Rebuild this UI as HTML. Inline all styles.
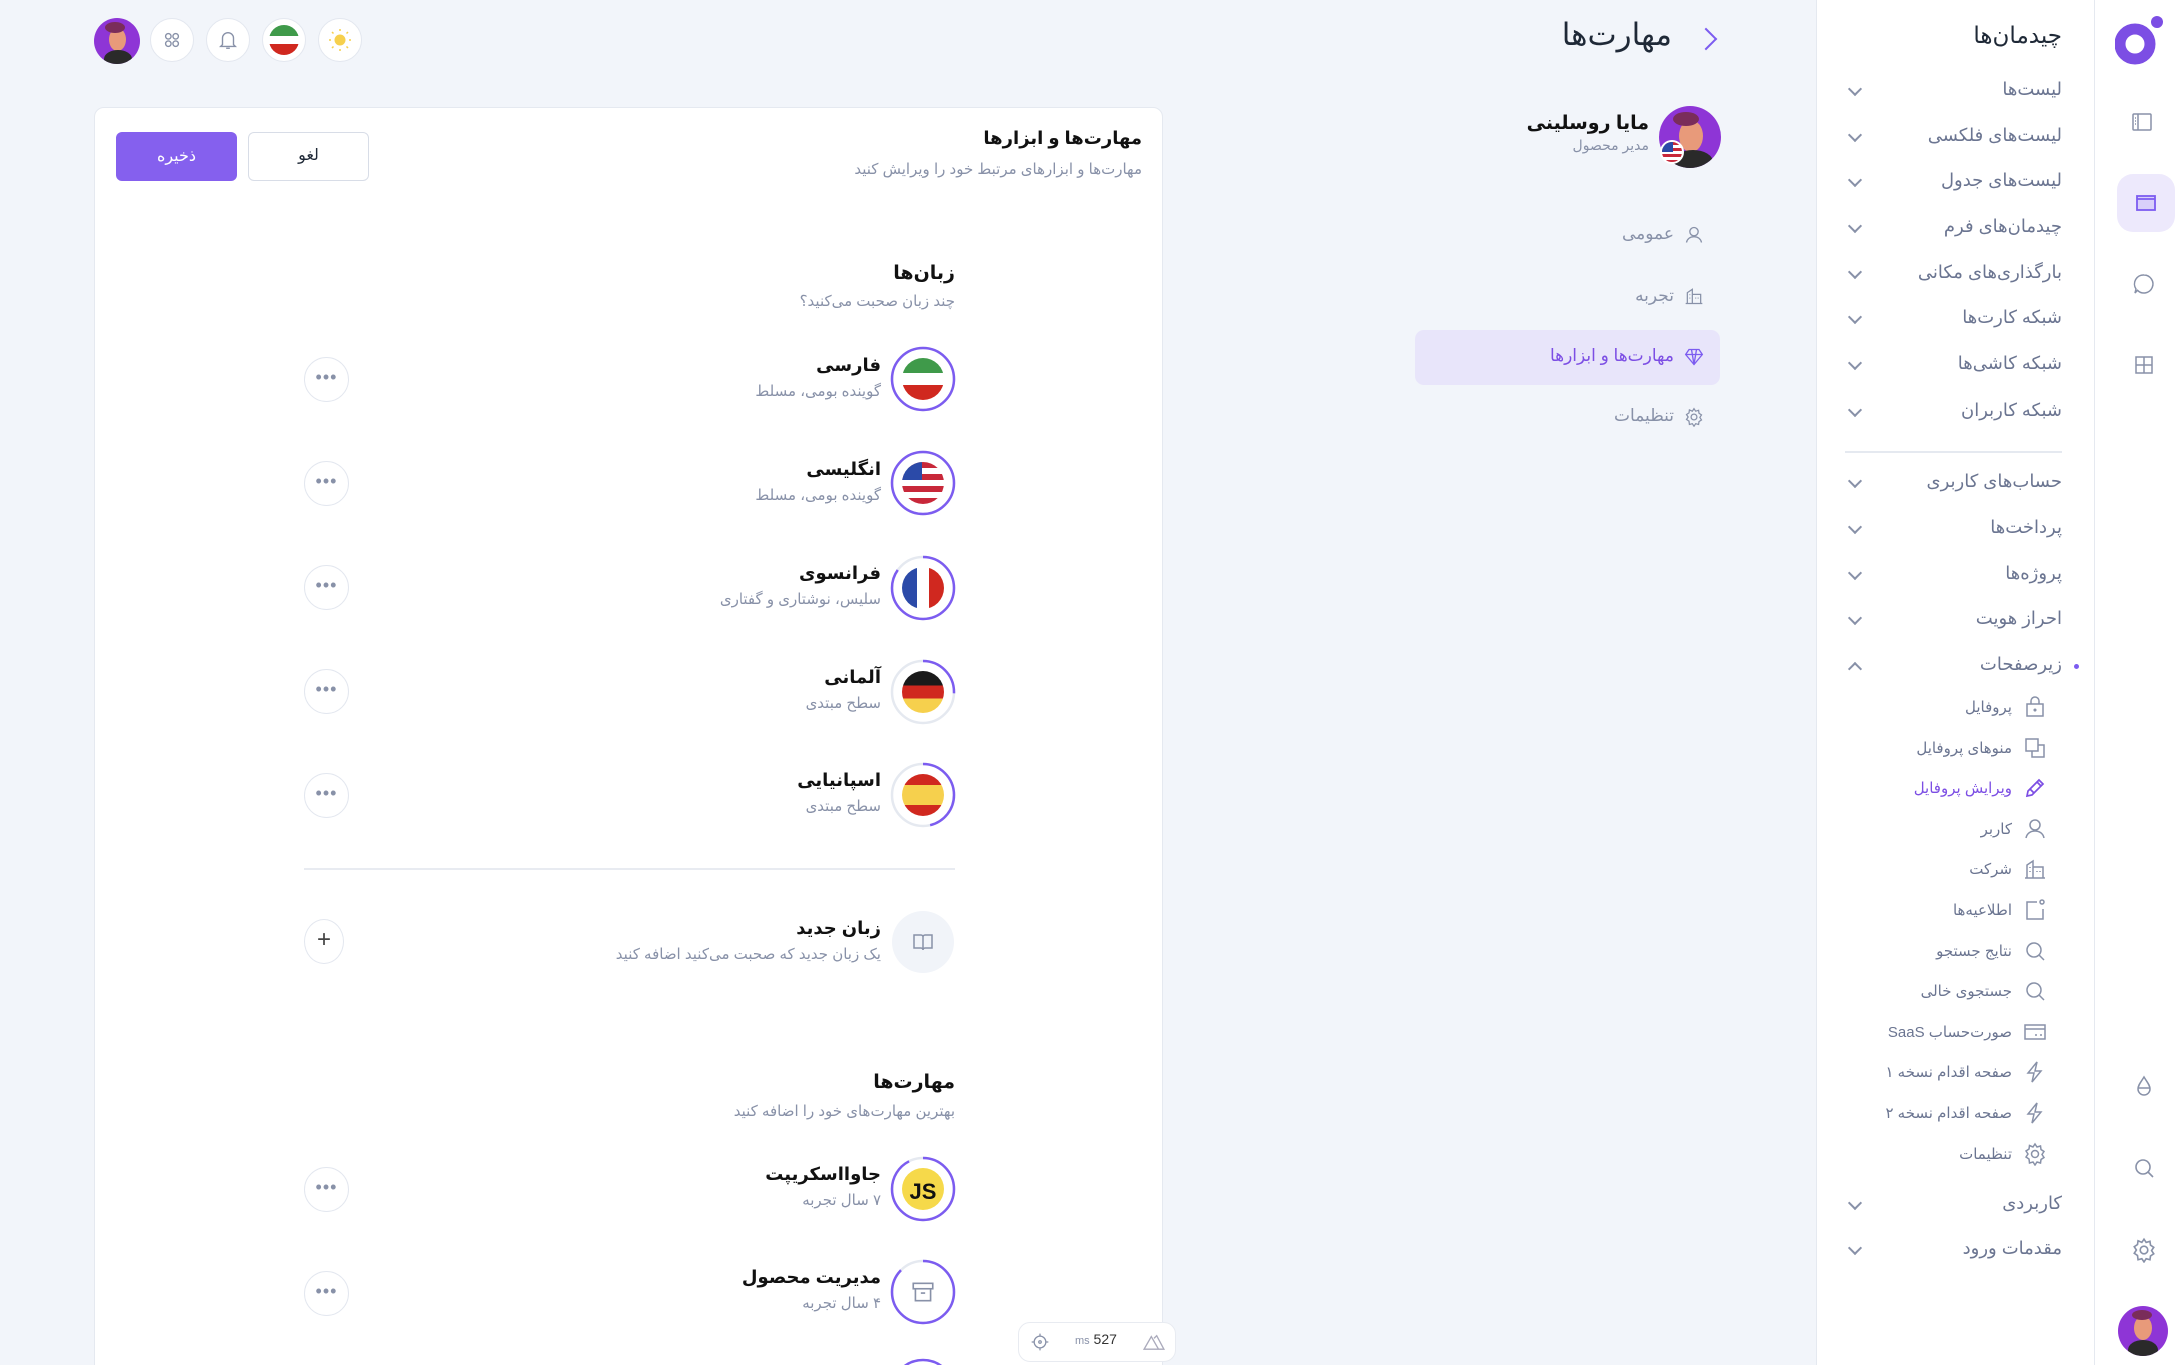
<!DOCTYPE html>
<html><head><meta charset="utf-8">
<style>
*{box-sizing:border-box;margin:0;padding:0}
html,body{width:2184px;height:1365px;overflow:hidden}
body{background:#f2f5fa;font-family:"Liberation Sans","Noto Sans CJK SC","DejaVu Sans",sans-serif;color:#1f2937}
#w{position:relative;width:2184px;height:1365px;overflow:hidden}
.a{position:absolute}
.r{position:absolute;direction:rtl;text-align:right;white-space:nowrap}
.muted{color:#8891a8}
.side{color:#6b7591;font-size:18px}
.sub{color:#6b7591;font-size:15px}
.chev{position:absolute;width:10px;height:10px;border-right:2px solid #8891a8;border-bottom:2px solid #8891a8;transform:rotate(45deg)}
.dots{position:absolute;width:45px;height:45px;border:1.5px solid #e3e7ef;border-radius:50%;background:#fff;text-align:center;line-height:38px;color:#8891a8;font-size:18px;letter-spacing:1px}
.tb{position:absolute;width:44px;height:44px;border:1.5px solid #e3e7ef;border-radius:50%;background:#fff}
</style></head><body><div id="w">

<!-- icon rail -->
<div class="a" style="left:2094px;top:0;width:90px;height:1365px;background:#fff;border-left:1.5px solid #e5e9f0"></div>
<svg class="a" style="left:2115px;top:14px" width="52" height="56" viewBox="0 0 52 56"><circle cx="20" cy="30" r="15" fill="none" stroke="#7c4ee4" stroke-width="11"/><circle cx="42" cy="8" r="6" fill="#7c4ee4"/></svg>
<svg class="a" style="left:2130px;top:110px" width="24" height="24" viewBox="0 0 24 24" fill="none" stroke="#8891a8" stroke-width="1.5"><rect x="3" y="4" width="18" height="16" rx="1"/><path d="M8 4v16M5 8h1M5 11h1M5 14h1"/></svg>
<div class="a" style="left:2117px;top:174px;width:58px;height:58px;border-radius:16px;background:#ede9fc"></div>
<svg class="a" style="left:2134px;top:191px" width="24" height="24" viewBox="0 0 24 24" fill="none" stroke="#7c5cf0" stroke-width="1.8"><rect x="3" y="5" width="18" height="14" fill="#d9d0fa"/><path d="M3 8h18"/></svg>
<svg class="a" style="left:2132px;top:272px" width="24" height="24" viewBox="0 0 24 24" fill="none" stroke="#8891a8" stroke-width="1.5"><path d="M12 3a9 9 0 1 1-6.5 15.3L3 21l1-4A9 9 0 0 1 12 3z"/></svg>
<svg class="a" style="left:2132px;top:353px" width="24" height="24" viewBox="0 0 24 24" fill="none" stroke="#8891a8" stroke-width="1.5"><rect x="4" y="4" width="16" height="16"/><path d="M12 4v16M4 12h16"/></svg>
<svg class="a" style="left:2132px;top:1074px" width="24" height="24" viewBox="0 0 24 24" fill="none" stroke="#8891a8" stroke-width="1.5"><path d="M12 3c-3 5-6 8-6 12a6 6 0 0 0 12 0c0-4-3-7-6-12z"/><path d="M6 14h12"/></svg>
<svg class="a" style="left:2132px;top:1156px" width="24" height="24" viewBox="0 0 24 24" fill="none" stroke="#8891a8" stroke-width="1.6"><circle cx="11" cy="11" r="7"/><path d="M16 16l5 5"/></svg>
<svg class="a" style="left:2131px;top:1237px" width="26" height="26" viewBox="0 0 24 24" fill="none" stroke="#8891a8" stroke-width="1.5"><circle cx="12" cy="12" r="3.5"/><path d="M12 2l2 3 3.5-1 .5 3.5 3 2-2 3 2 3-3 2-.5 3.5-3.5-1-2 3-2-3-3.5 1L6 17l-3-2 2-3-2-3 3-2 .5-3.5L10 5z"/></svg>
<div class="a" style="left:2118px;top:1306px;width:50px;height:50px;border-radius:50%;background:#8e35d6;overflow:hidden"><div class="a" style="left:16px;top:10px;width:18px;height:24px;border-radius:50%;background:#e89a7a"></div><div class="a" style="left:10px;top:34px;width:30px;height:20px;border-radius:50% 50% 0 0;background:#2a2a2a"></div><div class="a" style="left:14px;top:4px;width:20px;height:10px;border-radius:50%;background:#7a2d5a"></div></div>

<!-- sidebar -->
<div class="a" style="left:1816px;top:0;width:278px;height:1365px;background:#fff;border-left:1.5px solid #e5e9f0"></div>
<div class="r" style="right:122px;top:22px;font-size:23px;color:#1f2937">چیدمان‌ها</div>
<div class="r side" style="right:122px;top:79px">لیست‌ها</div><div class="chev" style="left:1850px;top:84px"></div>
<div class="r side" style="right:122px;top:125px">لیست‌های فلکسی</div><div class="chev" style="left:1850px;top:130px"></div>
<div class="r side" style="right:122px;top:170px">لیست‌های جدول</div><div class="chev" style="left:1850px;top:175px"></div>
<div class="r side" style="right:122px;top:216px">چیدمان‌های فرم</div><div class="chev" style="left:1850px;top:221px"></div>
<div class="r side" style="right:122px;top:262px">بارگذاری‌های مکانی</div><div class="chev" style="left:1850px;top:267px"></div>
<div class="r side" style="right:122px;top:307px">شبکه کارت‌ها</div><div class="chev" style="left:1850px;top:312px"></div>
<div class="r side" style="right:122px;top:353px">شبکه کاشی‌ها</div><div class="chev" style="left:1850px;top:358px"></div>
<div class="r side" style="right:122px;top:400px">شبکه کاربران</div><div class="chev" style="left:1850px;top:405px"></div>
<div class="a" style="left:1845px;top:451px;width:217px;height:1.5px;background:#e5e9f0"></div>
<div class="r side" style="right:122px;top:471px">حساب‌های کاربری</div><div class="chev" style="left:1850px;top:476px"></div>
<div class="r side" style="right:122px;top:517px">پرداخت‌ها</div><div class="chev" style="left:1850px;top:522px"></div>
<div class="r side" style="right:122px;top:563px">پروژه‌ها</div><div class="chev" style="left:1850px;top:568px"></div>
<div class="r side" style="right:122px;top:608px">احراز هویت</div><div class="chev" style="left:1850px;top:613px"></div>
<div class="r side" style="right:122px;top:654px">زیرصفحات</div><div class="chev" style="left:1850px;top:664px;transform:rotate(-135deg)"></div>
<div class="a" style="left:2074px;top:664px;width:5px;height:5px;border-radius:50%;background:#7c5cf0"></div>

<div class="r sub" style="right:172px;top:698px">پروفایل</div>
<div class="r sub" style="right:172px;top:739px">منوهای پروفایل</div>
<div class="r sub" style="right:172px;top:779px;color:#7c4ee4">ویرایش پروفایل</div>
<div class="r sub" style="right:172px;top:820px">کاربر</div>
<div class="r sub" style="right:172px;top:860px">شرکت</div>
<div class="r sub" style="right:172px;top:901px">اطلاعیه‌ها</div>
<div class="r sub" style="right:172px;top:942px">نتایج جستجو</div>
<div class="r sub" style="right:172px;top:982px">جستجوی خالی</div>
<div class="r sub" style="right:172px;top:1023px">صورت‌حساب SaaS</div>
<div class="r sub" style="right:172px;top:1063px">صفحه اقدام نسخه ۱</div>
<div class="r sub" style="right:172px;top:1104px">صفحه اقدام نسخه ۲</div>
<div class="r sub" style="right:172px;top:1145px">تنظیمات</div>
<svg class="a" style="left:2023px;top:695px" width="24" height="24" viewBox="0 0 24 24" fill="none" stroke="#8891a8" stroke-width="1.5"><rect x="4" y="9" width="16" height="12"/><path d="M8 9V6a4 4 0 0 1 8 0v3"/><circle cx="12" cy="15" r=".8"/></svg>
<svg class="a" style="left:2023px;top:736px" width="24" height="24" viewBox="0 0 24 24" fill="none" stroke="#8891a8" stroke-width="1.5"><rect x="3" y="3" width="12" height="12"/><path d="M15 9h6v12H9v-6"/></svg>
<svg class="a" style="left:2023px;top:776px" width="24" height="24" viewBox="0 0 24 24" fill="none" stroke="#7c4ee4" stroke-width="1.7"><path d="M4 20l1-5L16 4l4 4L9 19z"/><path d="M14 6l4 4M7 13l4 4"/></svg>
<svg class="a" style="left:2023px;top:817px" width="24" height="24" viewBox="0 0 24 24" fill="none" stroke="#8891a8" stroke-width="1.5"><circle cx="12" cy="8" r="5"/><path d="M3 21c1-5 5-7 9-7s8 2 9 7"/></svg>
<svg class="a" style="left:2023px;top:857px" width="24" height="24" viewBox="0 0 24 24" fill="none" stroke="#8891a8" stroke-width="1.5"><path d="M2 21h20M4 21V8l6-4v17M10 10h10v11M7 10v1M7 14v1M14 14v1M17 14v1"/></svg>
<svg class="a" style="left:2023px;top:898px" width="24" height="24" viewBox="0 0 24 24" fill="none" stroke="#8891a8" stroke-width="1.5"><path d="M14 4H4v17h16V11"/><circle cx="19" cy="4" r="2"/></svg>
<svg class="a" style="left:2023px;top:939px" width="24" height="24" viewBox="0 0 24 24" fill="none" stroke="#8891a8" stroke-width="1.5"><circle cx="11" cy="11" r="7"/><path d="M16 16l5 5"/></svg>
<svg class="a" style="left:2023px;top:979px" width="24" height="24" viewBox="0 0 24 24" fill="none" stroke="#8891a8" stroke-width="1.5"><circle cx="11" cy="11" r="7"/><path d="M16 16l5 5"/></svg>
<svg class="a" style="left:2023px;top:1020px" width="24" height="24" viewBox="0 0 24 24" fill="none" stroke="#8891a8" stroke-width="1.5"><rect x="2" y="5" width="20" height="14"/><path d="M2 9h20M12 15h2M17 15h2"/></svg>
<svg class="a" style="left:2023px;top:1060px" width="24" height="24" viewBox="0 0 24 24" fill="none" stroke="#8891a8" stroke-width="1.5"><path d="M14 2L5 13h6l-2 9 9-11h-6z"/></svg>
<svg class="a" style="left:2023px;top:1101px" width="24" height="24" viewBox="0 0 24 24" fill="none" stroke="#8891a8" stroke-width="1.5"><path d="M14 2L5 13h6l-2 9 9-11h-6z"/></svg>
<svg class="a" style="left:2023px;top:1142px" width="24" height="24" viewBox="0 0 24 24" fill="none" stroke="#8891a8" stroke-width="1.5"><circle cx="12" cy="12" r="3.5"/><path d="M12 2l2 3 3.5-1 .5 3.5 3 2-2 3 2 3-3 2-.5 3.5-3.5-1-2 3-2-3-3.5 1L6 17l-3-2 2-3-2-3 3-2 .5-3.5L10 5z"/></svg>
<div class="r side" style="right:122px;top:1193px">کاربردی</div><div class="chev" style="left:1850px;top:1198px"></div>
<div class="r side" style="right:122px;top:1238px">مقدمات ورود</div><div class="chev" style="left:1850px;top:1243px"></div>

<!-- profile column -->
<div class="r" style="right:512px;top:17px;font-size:31px;color:#1f2937">مهارت‌ها</div>
<div class="a" style="left:1698px;top:31px;width:16px;height:16px;border-right:2px solid #7c5cf0;border-bottom:2px solid #7c5cf0;transform:rotate(-45deg)"></div>
<div class="a" style="left:1659px;top:106px;width:62px;height:62px;border-radius:50%;background:#8e35d6;overflow:hidden"><div class="a" style="left:20px;top:14px;width:24px;height:32px;border-radius:50%;background:#e89a7a"></div><div class="a" style="left:14px;top:44px;width:40px;height:24px;border-radius:50% 50% 0 0;background:#2a2a2a"></div><div class="a" style="left:14px;top:6px;width:26px;height:14px;border-radius:50%;background:#7a2d5a"></div></div>
<div class="a" style="left:1660px;top:140px;width:24px;height:24px;border-radius:50%;border:2px solid #fff;background:repeating-linear-gradient(#c8283a 0 3px,#fff 3px 6px);overflow:hidden"><div style="width:11px;height:10px;background:#2b4aa8"></div></div>
<div class="r" style="right:535px;top:112px;font-size:19px;font-weight:bold;color:#111">مایا روسلینی</div>
<div class="r muted" style="right:535px;top:137px;font-size:14px">مدیر محصول</div>

<div class="r muted" style="right:510px;top:224px;font-size:17px">عمومی</div>
<svg class="a" style="left:1684px;top:225px" width="20" height="20" viewBox="0 0 24 24" fill="none" stroke="#8891a8" stroke-width="1.6"><circle cx="12" cy="8" r="5"/><path d="M3 21c1-5 5-7 9-7s8 2 9 7"/></svg>
<div class="r muted" style="right:510px;top:286px;font-size:17px">تجربه</div>
<svg class="a" style="left:1684px;top:286px" width="20" height="20" viewBox="0 0 24 24" fill="none" stroke="#8891a8" stroke-width="1.5"><path d="M2 21h20M4 21V8l6-4v17M10 10h10v11M7 10v1M7 14v1M14 14v1M17 14v1"/></svg>
<div class="a" style="left:1415px;top:330px;width:305px;height:55px;border-radius:9px;background:#e8e5fa"></div>
<div class="r" style="right:510px;top:346px;font-size:17px;color:#7c4ee4">مهارت‌ها و ابزارها</div>
<svg class="a" style="left:1684px;top:347px" width="20" height="20" viewBox="0 0 24 24" fill="none" stroke="#7c5cf0" stroke-width="1.6"><path d="M6 3h12l4 6-10 12L2 9z"/><path d="M2 9h20M9 3l3 18 3-18"/></svg>
<div class="r muted" style="right:510px;top:406px;font-size:17px">تنظیمات</div>
<svg class="a" style="left:1684px;top:407px" width="20" height="20" viewBox="0 0 24 24" fill="none" stroke="#8891a8" stroke-width="1.5"><circle cx="12" cy="12" r="3.5"/><path d="M12 2l2 3 3.5-1 .5 3.5 3 2-2 3 2 3-3 2-.5 3.5-3.5-1-2 3-2-3-3.5 1L6 17l-3-2 2-3-2-3 3-2 .5-3.5L10 5z"/></svg>

<!-- top toolbar -->
<div class="a" style="left:94px;top:18px;width:46px;height:46px;border-radius:50%;background:#8e35d6;overflow:hidden"><div class="a" style="left:15px;top:10px;width:17px;height:23px;border-radius:50%;background:#e89a7a"></div><div class="a" style="left:10px;top:32px;width:28px;height:18px;border-radius:50% 50% 0 0;background:#2a2a2a"></div><div class="a" style="left:11px;top:4px;width:20px;height:11px;border-radius:50%;background:#7a2d5a"></div></div>
<div class="tb" style="left:150px;top:18px"><svg class="a" style="left:10px;top:10px" width="22" height="22" viewBox="0 0 24 24" fill="none" stroke="#8891a8" stroke-width="1.5"><circle cx="8" cy="8" r="3"/><circle cx="16" cy="8" r="3"/><circle cx="8" cy="16" r="3"/><circle cx="16" cy="16" r="3"/></svg></div>
<div class="tb" style="left:206px;top:18px"><svg class="a" style="left:10px;top:10px" width="22" height="22" viewBox="0 0 24 24" fill="none" stroke="#8891a8" stroke-width="1.5"><path d="M6 17V10a6 6 0 0 1 12 0v7l2 2H4z"/><path d="M10 21h4"/></svg></div>
<div class="tb" style="left:262px;top:18px"><div class="a" style="left:6px;top:6px;width:30px;height:30px;border-radius:50%;background:linear-gradient(#3f9a4a 0 36%,#fff 36% 64%,#d0281f 64%)"></div></div>
<div class="tb" style="left:318px;top:18px"><svg class="a" style="left:9px;top:9px" width="24" height="24" viewBox="0 0 24 24"><circle cx="12" cy="12" r="5.5" fill="#f6d04d"/><g stroke="#f6d04d" stroke-width="1.5"><path d="M12 1v2M12 21v2M1 12h2M21 12h2M4 4l1.5 1.5M18.5 18.5L20 20M4 20l1.5-1.5M18.5 5.5L20 4"/></g></svg></div>

<!-- card -->
<div class="a" style="left:94px;top:107px;width:1069px;height:1300px;background:#fff;border:1.5px solid #e5e9f0;border-radius:10px"></div>
<div class="r" style="right:1042px;top:128px;font-size:18px;font-weight:bold;color:#111">مهارت‌ها و ابزارها</div>
<div class="r muted" style="right:1042px;top:160px;font-size:15px">مهارت‌ها و ابزارهای مرتبط خود را ویرایش کنید</div>
<div class="a" style="left:116px;top:132px;width:121px;height:49px;border-radius:6px;background:#8560ee;color:#fff;text-align:center;line-height:49px;font-size:16px">ذخیره</div>
<div class="a" style="left:248px;top:132px;width:121px;height:49px;border-radius:6px;border:1.5px solid #d8dde7;background:#fff;color:#1f2937;text-align:center;line-height:46px;font-size:16px">لغو</div>

<div class="r" style="right:1229px;top:262px;font-size:19px;font-weight:bold;color:#111">زبان‌ها</div>
<div class="r muted" style="right:1229px;top:292px;font-size:15px">چند زبان صحبت می‌کنید؟</div>

<svg class="a" style="left:890px;top:346px" width="66" height="66"><circle cx="33" cy="33" r="31" fill="none" stroke="#e5e9f0" stroke-width="2.5"/><circle cx="33" cy="33" r="31" fill="none" stroke="#7c5cf0" stroke-width="2.5"/></svg>
<div class="a" style="left:902px;top:358px;width:42px;height:42px;border-radius:50%;background:linear-gradient(#3f9a4a 0 36%,#fff 36% 64%,#d0281f 64%)"></div>
<div class="r" style="right:1303px;top:355px;font-size:18px;font-weight:bold;color:#111">فارسی</div>
<div class="r muted" style="right:1303px;top:382px;font-size:15px">گوینده بومی، مسلط</div>
<div class="dots" style="left:304px;top:357px">•••</div>

<svg class="a" style="left:890px;top:450px" width="66" height="66"><circle cx="33" cy="33" r="31" fill="none" stroke="#e5e9f0" stroke-width="2.5"/><circle cx="33" cy="33" r="31" fill="none" stroke="#7c5cf0" stroke-width="2.5"/></svg>
<div class="a" style="left:902px;top:462px;width:42px;height:42px;border-radius:50%;background:repeating-linear-gradient(#c8283a 0 6px,#fff 6px 12px);overflow:hidden"><div style="width:20px;height:18px;background:#2b4aa8"></div></div>
<div class="r" style="right:1303px;top:459px;font-size:18px;font-weight:bold;color:#111">انگلیسی</div>
<div class="r muted" style="right:1303px;top:486px;font-size:15px">گوینده بومی، مسلط</div>
<div class="dots" style="left:304px;top:461px">•••</div>

<svg class="a" style="left:890px;top:555px;transform:rotate(-90deg)" width="66" height="66"><circle cx="33" cy="33" r="31" fill="none" stroke="#e5e9f0" stroke-width="2.5"/><circle cx="33" cy="33" r="31" fill="none" stroke="#7c5cf0" stroke-width="2.5" stroke-dasharray="165 200"/></svg>
<div class="a" style="left:902px;top:567px;width:42px;height:42px;border-radius:50%;background:linear-gradient(90deg,#2b4aa8 0 36%,#fff 36% 64%,#d0281f 64%)"></div>
<div class="r" style="right:1303px;top:563px;font-size:18px;font-weight:bold;color:#111">فرانسوی</div>
<div class="r muted" style="right:1303px;top:590px;font-size:15px">سلیس، نوشتاری و گفتاری</div>
<div class="dots" style="left:304px;top:565px">•••</div>

<svg class="a" style="left:890px;top:659px;transform:rotate(-90deg)" width="66" height="66"><circle cx="33" cy="33" r="31" fill="none" stroke="#e5e9f0" stroke-width="2.5"/><circle cx="33" cy="33" r="31" fill="none" stroke="#7c5cf0" stroke-width="2.5" stroke-dasharray="50 200"/></svg>
<div class="a" style="left:902px;top:671px;width:42px;height:42px;border-radius:50%;background:linear-gradient(#1a1a1a 0 34%,#d0281f 34% 66%,#f6d04d 66%)"></div>
<div class="r" style="right:1303px;top:667px;font-size:18px;font-weight:bold;color:#111">آلمانی</div>
<div class="r muted" style="right:1303px;top:694px;font-size:15px">سطح مبتدی</div>
<div class="dots" style="left:304px;top:669px">•••</div>

<svg class="a" style="left:890px;top:762px;transform:rotate(-90deg)" width="66" height="66"><circle cx="33" cy="33" r="31" fill="none" stroke="#e5e9f0" stroke-width="2.5"/><circle cx="33" cy="33" r="31" fill="none" stroke="#7c5cf0" stroke-width="2.5" stroke-dasharray="90 200"/></svg>
<div class="a" style="left:902px;top:774px;width:42px;height:42px;border-radius:50%;background:linear-gradient(#d0281f 0 26%,#f6d04d 26% 74%,#d0281f 74%)"></div>
<div class="r" style="right:1303px;top:770px;font-size:18px;font-weight:bold;color:#111">اسپانیایی</div>
<div class="r muted" style="right:1303px;top:797px;font-size:15px">سطح مبتدی</div>
<div class="dots" style="left:304px;top:773px">•••</div>

<div class="a" style="left:304px;top:868px;width:651px;height:2px;background:#e8ebf1"></div>

<div class="a" style="left:892px;top:911px;width:62px;height:62px;border-radius:50%;background:#f1f4f9"></div>
<svg class="a" style="left:911px;top:930px" width="24" height="24" viewBox="0 0 24 24" fill="none" stroke="#8891a8" stroke-width="1.5"><path d="M3 5h7a2 2 0 0 1 2 2v13a2 2 0 0 0-2-2H3zM21 5h-7a2 2 0 0 0-2 2v13a2 2 0 0 1 2-2h7z"/></svg>
<div class="r" style="right:1303px;top:918px;font-size:18px;font-weight:bold;color:#111">زبان جدید</div>
<div class="r muted" style="right:1303px;top:945px;font-size:15px">یک زبان جدید که صحبت می‌کنید اضافه کنید</div>
<div class="a" style="left:304px;top:919px;width:40px;height:45px;border:1.5px solid #e3e7ef;border-radius:50%;text-align:center;line-height:40px;font-size:24px;color:#444">+</div>

<div class="r" style="right:1229px;top:1071px;font-size:19px;font-weight:bold;color:#111">مهارت‌ها</div>
<div class="r muted" style="right:1229px;top:1102px;font-size:15px">بهترین مهارت‌های خود را اضافه کنید</div>

<svg class="a" style="left:890px;top:1156px;transform:rotate(-90deg)" width="66" height="66"><circle cx="33" cy="33" r="31" fill="none" stroke="#e5e9f0" stroke-width="2.5"/><circle cx="33" cy="33" r="31" fill="none" stroke="#7c5cf0" stroke-width="2.5" stroke-dasharray="180 200"/></svg>
<div class="a" style="left:902px;top:1168px;width:42px;height:42px;border-radius:50%;background:#f6d94a;font-weight:bold;font-size:22px;color:#111;text-align:center;line-height:48px">JS</div>
<div class="r" style="right:1303px;top:1164px;font-size:18px;font-weight:bold;color:#111">جاوااسکریپت</div>
<div class="r muted" style="right:1303px;top:1191px;font-size:15px">۷ سال تجربه</div>
<div class="dots" style="left:304px;top:1167px">•••</div>

<svg class="a" style="left:890px;top:1259px;transform:rotate(-90deg)" width="66" height="66"><circle cx="33" cy="33" r="31" fill="none" stroke="#e5e9f0" stroke-width="2.5"/><circle cx="33" cy="33" r="31" fill="none" stroke="#7c5cf0" stroke-width="2.5" stroke-dasharray="170 200"/></svg>
<svg class="a" style="left:910px;top:1279px" width="26" height="26" viewBox="0 0 24 24" fill="none" stroke="#8891a8" stroke-width="1.5"><rect x="3" y="4" width="18" height="5"/><path d="M5 9v11h14V9M10 13h4"/></svg>
<div class="r" style="right:1303px;top:1267px;font-size:18px;font-weight:bold;color:#111">مدیریت محصول</div>
<div class="r muted" style="right:1303px;top:1294px;font-size:15px">۴ سال تجربه</div>
<div class="dots" style="left:304px;top:1271px">•••</div>

<svg class="a" style="left:890px;top:1358px" width="66" height="66"><circle cx="33" cy="33" r="31" fill="none" stroke="#7c5cf0" stroke-width="2.5"/></svg>

<!-- perf widget -->
<div class="a" style="left:1018px;top:1322px;width:158px;height:40px;border-radius:12px;background:#fff;border:1.5px solid #e8ebf1"></div>
<svg class="a" style="left:1030px;top:1332px" width="20" height="20" viewBox="0 0 24 24" fill="none" stroke="#8891a8" stroke-width="1.5"><circle cx="12" cy="12" r="7"/><circle cx="12" cy="12" r="1.5"/><path d="M12 2v3M12 19v3M2 12h3M19 12h3"/></svg>
<div class="a" style="left:1075px;top:1331px;font-size:14px;color:#333"><span style="font-size:11px;color:#8891a8">ms</span> 527</div>
<svg class="a" style="left:1143px;top:1333px" width="22" height="18" viewBox="0 0 24 20" fill="none" stroke="#aab" stroke-width="1.5"><path d="M1 18L9 4l8 14zM12 6l3-3 8 15h-6"/></svg>
</div></body></html>
